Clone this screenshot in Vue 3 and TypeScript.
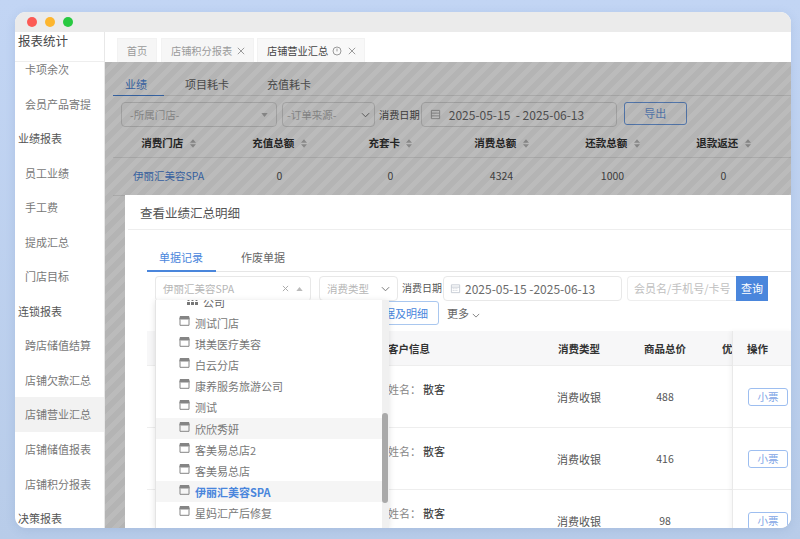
<script setup lang="ts">
interface MenuItem {
  label: string
  group?: boolean
  active?: boolean
}

const menu: MenuItem[] = [
  { label: '卡项余次' },
  { label: '会员产品寄提' },
  { label: '业绩报表', group: true },
  { label: '员工业绩' },
  { label: '手工费' },
  { label: '提成汇总' },
  { label: '门店目标' },
  { label: '连锁报表', group: true },
  { label: '跨店储值结算' },
  { label: '店铺欠款汇总' },
  { label: '店铺营业汇总', active: true },
  { label: '店铺储值报表' },
  { label: '店铺积分报表' },
  { label: '决策报表', group: true }
]

const pageColumns = ['消费门店', '充值总额', '充套卡', '消费总额', '还款总额', '退款返还']
const pageValues = ['伊丽汇美容SPA', '0', '0', '4324', '1000', '0']

const stores = [
  { name: '测试门店' },
  { name: '琪美医疗美容' },
  { name: '白云分店' },
  { name: '康养服务旅游公司' },
  { name: '测试' },
  { name: '欣欣秀妍', hover: true },
  { name: '客美易总店2' },
  { name: '客美易总店' },
  { name: '伊丽汇美容SPA', selected: true },
  { name: '星妈汇产后修复' }
]

const orders = [{ total: '488' }, { total: '416' }, { total: '98' }]
</script>

<template>
  <div class="window">
    <div class="titlebar">
      <i class="dot red"></i>
      <i class="dot yellow"></i>
      <i class="dot green"></i>
    </div>
    <div class="body">
      <aside class="sidebar">
        <div class="brand">报表统计</div>
        <div class="menu">
          <div
            v-for="item in menu"
            :key="item.label"
            class="menu-item"
            :class="{ group: item.group, active: item.active }"
          >{{ item.label }}</div>
        </div>
      </aside>

      <main class="main">
        <div class="tabs">
          <div class="tab">首页</div>
          <div class="tab">
            店铺积分报表
            <svg class="tab-x" viewBox="0 0 8 8"><path d="M.8.8l6.4 6.4M7.2.8L.8 7.2" /></svg>
          </div>
          <div class="tab current">
            店铺营业汇总
            <svg class="tab-info" viewBox="0 0 10 10"><circle cx="5" cy="5" r="4" /><path d="M5 2.6v2.8" /></svg>
            <svg class="tab-x" viewBox="0 0 8 8"><path d="M.8.8l6.4 6.4M7.2.8L.8 7.2" /></svg>
          </div>
        </div>

        <div class="content">
          <div class="page">
            <div class="subtabs page-tabs">
              <span class="subtab on">业绩</span>
              <span class="subtab">项目耗卡</span>
              <span class="subtab">充值耗卡</span>
            </div>
            <div class="filters">
              <div class="field store-field">
                <span class="ph">-所属门店-</span>
                <svg class="tri" viewBox="0 0 8 5"><path d="M0 0h8L4 5z" /></svg>
              </div>
              <div class="field source-field">
                <span class="ph">-订单来源-</span>
                <svg class="chev" viewBox="0 0 10 6"><path d="M1 1l4 4 4-4" /></svg>
              </div>
              <span class="field-label">消费日期</span>
              <div class="field date-field">
                <svg class="cal" viewBox="0 0 12 12"><path d="M1.5 1.5h9v9h-9zM1.5 4.5h9M1.5 7.5h9" /></svg>
                <span class="date-text">2025-05-15 &nbsp;- 2025-06-13</span>
              </div>
              <div class="export">导出</div>
            </div>
            <div class="page-table head">
              <div v-for="col in pageColumns" :key="col" class="cell">
                {{ col }}
                <svg class="sort" viewBox="0 0 7 10"><path d="M3.5 0L7 4H0zM3.5 10L0 6h7z" /></svg>
              </div>
            </div>
            <div class="page-table row">
              <div
                v-for="(val, i) in pageValues"
                :key="i"
                class="cell"
                :class="{ link: i === 0 }"
              >{{ val }}</div>
            </div>
          </div>

          <div class="mask"></div>

          <section class="modal">
            <h2 class="modal-title">查看业绩汇总明细</h2>
            <div class="subtabs modal-tabs">
              <span class="subtab on">单据记录</span>
              <span class="subtab">作废单据</span>
            </div>

            <div class="m-filters">
              <div class="m-field m-store">
                <span class="ph">伊丽汇美容SPA</span>
                <svg class="clear" viewBox="0 0 8 8"><path d="M1 1l6 6M7 1L1 7" /></svg>
                <svg class="tri up" viewBox="0 0 8 5"><path d="M0 5h8L4 0z" /></svg>
              </div>
              <div class="m-field m-type">
                <span class="ph">消费类型</span>
                <svg class="chev" viewBox="0 0 10 6"><path d="M1 1l4 4 4-4" /></svg>
              </div>
              <span class="m-label">消费日期</span>
              <div class="m-field m-date">
                <svg class="cal light" viewBox="0 0 12 12"><path d="M1.5 2h9v8.5h-9zM1.5 4.5h9" /><path class="cal-dots" d="M3 6.2h6M3 8.2h6" /></svg>
                <span class="m-date-text">2025-05-15 -2025-06-13</span>
              </div>
              <div class="search">
                <span class="search-input">会员名/手机号/卡号</span>
                <span class="search-btn">查询</span>
              </div>
            </div>
            <div class="m-actions">
              <div class="detail-btn">单据及明细</div>
              <span class="more">更多
                <svg class="chev small" viewBox="0 0 10 6"><path d="M1 1l4 4 4-4" /></svg>
              </span>
            </div>

            <div class="m-table">
              <div class="m-scroll">
                <div class="m-row m-head">
                  <span class="c-customer">客户信息</span>
                  <span class="c-type">消费类型</span>
                  <span class="c-total">商品总价</span>
                  <span class="c-off">优惠</span>
                </div>
                <div v-for="(o, i) in orders" :key="i" class="m-row">
                  <span class="c-customer name"><em>姓名：</em><b>散客</b></span>
                  <span class="c-type">消费收银</span>
                  <span class="c-total num">{{ o.total }}</span>
                </div>
              </div>
              <div class="m-fixed">
                <div class="fixed-head">操作</div>
                <div v-for="(o, i) in orders" :key="i" class="fixed-cell">
                  <span class="ticket">小票</span>
                </div>
              </div>
            </div>

            <div class="dropdown">
              <div class="tree">
                <div class="tree-root">
                  <svg class="people" viewBox="0 0 11 6"><path d="M0 6V3h3v3zM4 6V3h3v3zM8 6V3h3v3zM.7 2a1 1 0 1 1 1.6 0zM4.7 2a1 1 0 1 1 1.6 0zM8.7 2a1 1 0 1 1 1.6 0z" /></svg>
                  公司
                </div>
                <div
                  v-for="s in stores"
                  :key="s.name"
                  class="tree-item"
                  :class="{ hover: s.hover, selected: s.selected }"
                >
                  <svg class="store" viewBox="0 0 11 10">
                    <path class="store-top" d="M1 0h9l1 3.6H0z" />
                    <path class="store-box" d="M1 3.5v5.8h9V3.5" />
                  </svg>
                  {{ s.name }}
                </div>
              </div>
              <div class="dd-bar"><div class="dd-thumb"></div></div>
            </div>
          </section>
        </div>
      </main>
    </div>
  </div>
</template>

<style>
html,
body {
  margin: 0;
  height: 100%;
  overflow: hidden;
  background: linear-gradient(180deg, #c2d5f4 0%, #b8cce9 100%);
}
</style>

<style scoped>
.window {
  width: 776px;
  height: 516px;
  margin: 12px 0 0 15px;
  border-radius: 11px;
  overflow: hidden;
  background: #fff;
  display: flex;
  flex-direction: column;
  box-shadow: 0 2px 10px rgba(90, 120, 170, 0.18);
  font-family: "Noto Sans CJK SC", "Liberation Sans", sans-serif;
  font-size: 11px;
  color: #606266;
}

.titlebar {
  height: 20px;
  flex: none;
  background: #ebebeb;
  display: flex;
  align-items: center;
  gap: 8px;
  padding-left: 12px;
}
.dot { width: 10px; height: 10px; border-radius: 50%; }
.red { background: #fc5b55; }
.yellow { background: #fdb62f; }
.green { background: #28c941; }

.body { flex: 1; display: flex; min-height: 0; }

.sidebar {
  width: 90px;
  flex: none;
  display: flex;
  flex-direction: column;
  border-right: 1px solid #e8e8e8;
  box-sizing: border-box;
}
.brand {
  height: 29px;
  flex: none;
  padding-left: 3px;
  font-size: 12.5px;
  line-height: 18px;
  color: #444;
  border-bottom: 1px solid #eee;
}
.menu { flex: 1; overflow: hidden; }
.menu-item {
  height: 34.55px;
  line-height: 34.55px;
  padding-left: 10px;
  color: #777;
  white-space: nowrap;
}
.menu-item:first-child { margin-top: -10px; }
.menu-item.group { padding-left: 3px; color: #555; }
.menu-item.active { background: #f2f2f2; }

.main { flex: 1; min-width: 0; display: flex; flex-direction: column; }

.tabs {
  height: 30px;
  flex: none;
  display: flex;
  align-items: flex-end;
  gap: 3px;
  padding-left: 12px;
}
.tab {
  height: 24px;
  padding: 0 8px 0 9px;
  background: #f6f6f6;
  border: 1px solid #f2f2f2;
  border-bottom: 0;
  box-sizing: border-box;
  color: #9a9a9a;
  font-size: 10.2px;
  white-space: nowrap;
  display: flex;
  align-items: center;
}
.tab:first-child { width: 40px; padding: 0; justify-content: center; }
.tab:nth-child(2) { width: 93px; margin-left: 1px; }
.tab.current { width: 108px; background: #f8f8f8; color: #444; }
.tab-x {
  width: 8px;
  height: 8px;
  margin-left: auto;
  fill: none;
  stroke: #909090;
  stroke-width: 0.9;
  flex: none;
}
.tab-info { width: 10px; height: 10px; margin-left: 4px; fill: none; stroke: #999; flex: none; }

.content { flex: 1; position: relative; overflow: hidden; }

.page { padding: 0 8px; width: 700px; }

.subtabs { display: flex; border-bottom: 1px solid #e6e6e6; }
.subtab { color: #666; white-space: nowrap; }
.subtab.on { color: #4a86dc; border-bottom: 1px solid #4a86dc; margin-bottom: -1px; }

.page-tabs { margin-top: 13px; height: 20px; line-height: 18px; }
.page-tabs .subtab { margin-left: 21px; }
.page-tabs .subtab:first-child { margin-left: 0; padding: 0 17px 0 12px; }
.page-tabs .subtab:nth-child(3) { margin-left: 38px; }

.filters { display: flex; align-items: flex-start; margin: 6px 0 0 8px; height: 25px; }
.field {
  height: 25px;
  box-sizing: border-box;
  border: 1px solid #dcdcdc;
  border-radius: 4px;
  display: flex;
  align-items: center;
  padding: 0 8px;
  justify-content: space-between;
}
.store-field { width: 156px; }
.source-field { width: 93px; margin-left: 5px; padding: 0 4px; }
.field-label { margin: 0 1px 0 4px; line-height: 25px; color: #555; font-size: 10.2px; }
.date-field { width: 196px; justify-content: flex-start; }
.date-text { font-size: 12px; color: #6b6b6b; margin-left: 8px; white-space: nowrap; }
.ph { color: #b6b6b6; white-space: nowrap; font-size: 10.5px; }
.tri { width: 7px; height: 4px; fill: #bbb; flex: none; }
.chev { width: 9px; height: 6px; fill: none; stroke: #777; stroke-width: 1.1; flex: none; }
.chev.small { width: 8px; height: 5px; margin-left: 1px; }
.cal { width: 11px; height: 11px; fill: none; stroke: #aaa; flex: none; }
.cal.light { stroke: #c4c9d2; margin-right: 4px; }
.cal-dots { stroke-dasharray: 1 1; }
.export {
  width: 63px;
  height: 23px;
  margin-left: 7px;
  border: 1px solid #6f9fe6;
  border-radius: 3px;
  box-sizing: border-box;
  color: #6f9fe6;
  text-align: center;
  line-height: 21px;
}

.page-table { display: grid; grid-template-columns: repeat(6, 111px); }
.page-table .cell { text-align: center; white-space: nowrap; }
.head { height: 30px; line-height: 32px; border-bottom: 1px solid #e8e8e8; color: #333; font-size: 10.5px; font-weight: 700; }
.row { height: 37px; line-height: 36px; border-bottom: 1px solid #e8e8e8; color: #555; font-size: 10.5px; }
.link { color: #4a86dc; }
.sort { width: 6px; height: 9px; fill: #bbb; margin-left: 4px; vertical-align: -1px; }

.mask {
  position: absolute;
  inset: 0;
  background: repeating-linear-gradient(
    135deg,
    rgba(0, 0, 0, 0.295) 0,
    rgba(0, 0, 0, 0.295) 5.3px,
    rgba(0, 0, 0, 0.265) 5.3px,
    rgba(0, 0, 0, 0.265) 10.6px
  );
}

.modal {
  position: absolute;
  left: 20px;
  top: 133px;
  width: 700px;
  height: 333px;
  background: #fff;
  overflow: hidden;
}
.modal-title {
  margin: 0 0 0 3px;
  padding-left: 12px;
  height: 34px;
  line-height: 36px;
  font-size: 12.5px;
  font-weight: 400;
  color: #555;
  border-bottom: 1px solid #eee;
}

.modal-tabs { margin: 14px 0 0 22px; height: 27px; line-height: 27px; }
.modal-tabs .subtab { margin-left: 25px; }
.modal-tabs .subtab:first-child { margin-left: 0; padding: 0 13px 0 12px; height: 26px; border-bottom-width: 2px; }

.m-filters { display: flex; margin: 4px 0 0 30px; align-items: flex-start; }
.m-field {
  height: 25px;
  box-sizing: border-box;
  border: 1px solid #e8e8e8;
  border-radius: 4px;
  display: flex;
  align-items: center;
  padding: 0 7px;
  flex: none;
}
.m-store { width: 156px; border-bottom-color: transparent; }
.m-store .ph { flex: 1; }
.clear { width: 7px; height: 7px; fill: none; stroke: #aaa; stroke-width: 1.1; margin-right: 7px; flex: none; }
.m-type { width: 79px; margin-left: 8px; justify-content: space-between; }
.m-label { margin: 0 1px 0 4px; line-height: 24px; color: #555; white-space: nowrap; font-size: 10px; }
.m-date { width: 179px; padding: 0 6px; }
.m-date-text { font-size: 12px; color: #6b6b6b; white-space: nowrap; }
.search { display: flex; margin-left: 5px; height: 25px; flex: none; }
.search-input {
  width: 109px;
  box-sizing: border-box;
  border: 1px solid #eee;
  border-right: 0;
  border-radius: 4px 0 0 4px;
  padding-left: 6px;
  line-height: 23px;
  color: #c0c0c0;
  white-space: nowrap;
  overflow: hidden;
}
.search-btn { width: 32px; background: #4a86dc; color: #fff; text-align: center; line-height: 25px; }

.m-actions { display: flex; align-items: center; margin: 0 0 0 30px; height: 24px; }
.detail-btn {
  margin-left: 202px;
  width: 82px;
  height: 24px;
  box-sizing: border-box;
  border: 1px solid #a9c7ef;
  border-radius: 3px;
  color: #4a86dc;
  text-align: right;
  padding-right: 10px;
  line-height: 22px;
  white-space: nowrap;
}
.more { margin-left: 8px; color: #666; white-space: nowrap; }

.m-table { display: flex; margin: 6px 0 0 22px; }
.m-scroll { width: 585px; flex: none; overflow: hidden; }
.m-row {
  display: grid;
  grid-template-columns: 241px 150px 82px 90px 60px;
  height: 62px;
  border-bottom: 1px solid #eee;
  box-sizing: border-box;
  align-items: center;
  color: #555;
  white-space: nowrap;
}
.m-head {
  height: 35px;
  background: #f7f7f8;
  color: #333;
  font-weight: 700;
  font-size: 10.5px;
  border-bottom-color: #eee;
}
.c-customer { grid-column: 2; }
.c-type, .c-total { text-align: center; }
.c-off { padding-left: 12px; }
.num { font-size: 10.5px; }
.name { align-self: start; padding-top: 15px; }
.name em { font-style: normal; color: #888; margin-right: 2px; }
.name b { font-weight: 400; color: #333; }

.m-fixed {
  width: 60px;
  flex: none;
  border-left: 1px solid #e9e9e9;
  box-shadow: -2px 0 4px rgba(0, 0, 0, 0.04);
  background: #fff;
}
.fixed-head {
  height: 35px;
  line-height: 35px;
  padding-left: 14px;
  background: #f7f7f8;
  color: #333;
  font-weight: 700;
  font-size: 10.5px;
  border-bottom: 1px solid #eee;
  box-sizing: border-box;
}
.fixed-cell {
  height: 62px;
  box-sizing: border-box;
  border-bottom: 1px solid #eee;
  display: flex;
  align-items: center;
  padding-left: 15px;
}
.ticket {
  width: 40px;
  height: 18px;
  box-sizing: border-box;
  border: 1px solid #9dbef0;
  border-radius: 3px;
  color: #7fa6e6;
  text-align: center;
  line-height: 15px;
  white-space: nowrap;
  font-size: 10.5px;
}

.dropdown {
  position: absolute;
  left: 30px;
  top: 105px;
  width: 234px;
  height: 228px;
  background: #fff;
  border-left: 1px solid #e4e4e4;
  box-sizing: border-box;
  display: flex;
  overflow: hidden;
  box-shadow: 0 1px 6px rgba(0, 0, 0, 0.12);
}
.tree { flex: 1; min-width: 0; margin-top: -8.5px; }
.tree-root {
  height: 21px;
  display: flex;
  align-items: center;
  padding-left: 31px;
  color: #666;
  gap: 5px;
}
.people { width: 11px; height: 6px; fill: #777; }
.tree-item {
  height: 21.1px;
  display: flex;
  align-items: center;
  padding-left: 23px;
  gap: 5px;
  color: #777;
  white-space: nowrap;
}
.tree-item.hover { background: #f5f5f5; }
.tree-item.selected { background: #f5f5f5; color: #4a86dc; font-weight: 700; }
.store { width: 11px; height: 10px; flex: none; margin-top: -4px; }
.store-top { fill: #858585; }
.store-box { fill: none; stroke: #858585; stroke-width: 1; }
.dd-bar { width: 7px; flex: none; background: #f0f0f0; position: relative; }
.dd-thumb {
  position: absolute;
  left: 0;
  top: 113px;
  width: 6px;
  height: 90px;
  border-radius: 3px;
  background: #a9a9a9;
}
</style>
